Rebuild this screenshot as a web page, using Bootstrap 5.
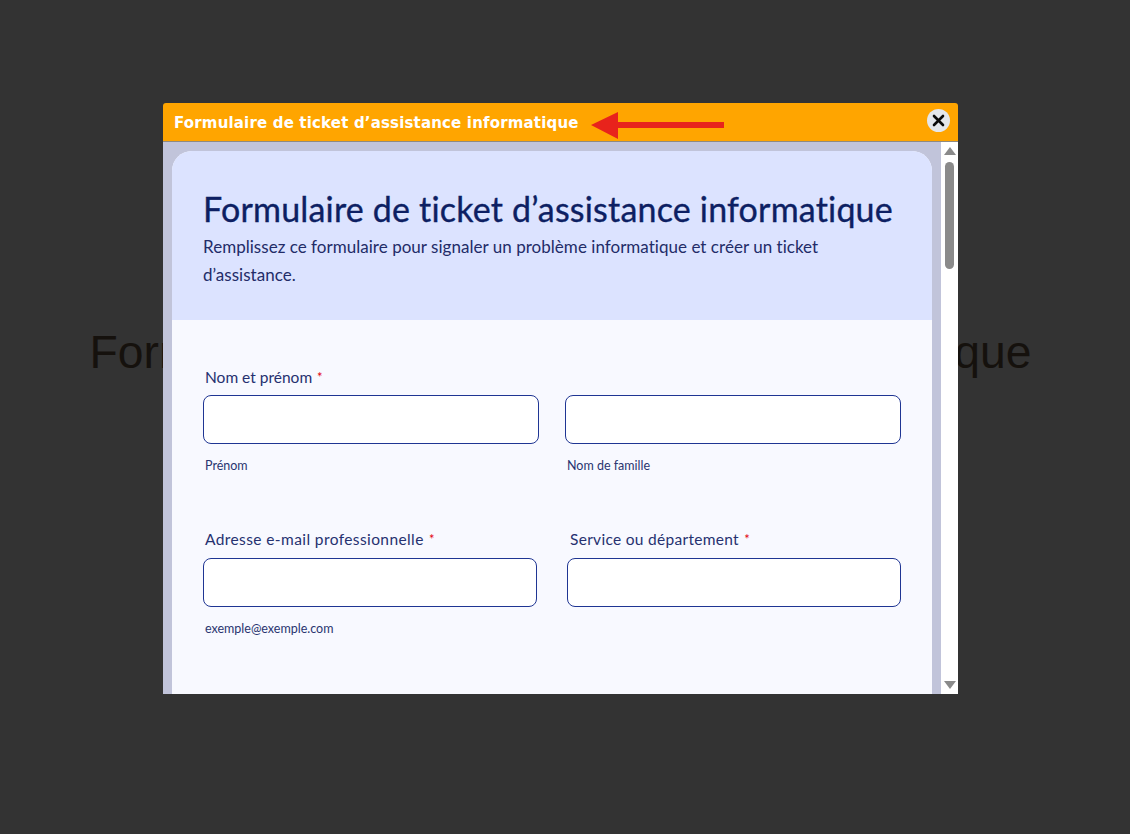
<!DOCTYPE html>
<html lang="fr">
<head>
<meta charset="utf-8">
<title>Formulaire de ticket d’assistance informatique</title>
<link rel="stylesheet" href="https://cdn.jsdelivr.net/npm/bootstrap@5.3.0/dist/css/bootstrap.min.css">
<style>
html, body { height: 100%; }
body { background: #333333; overflow: hidden; font-family: "Lato", "Noto Sans", sans-serif; font-variant-ligatures: none; }
.bg-heading { font-family: "Liberation Sans", Arial, sans-serif; font-size: 46.3px; line-height: 55px; color: #15110d; font-weight: 400; text-align: center; margin: 0; padding-top: 325px; padding-right: 9px; white-space: nowrap; }
.popup { position: absolute; left: 163px; top: 103px; width: 795px; height: 591px; border-radius: 3px 3px 0 0; overflow: hidden; display: flex; flex-direction: column; }
.popup-head { height: 39px; background: #ffa500; border-bottom: 1px solid #8f8a80; padding: 0 8px 0 11px; flex: none; }
.popup-title { font-family: "DejaVu Sans", Verdana, sans-serif; font-weight: 700; font-size: 15px; letter-spacing: .17px; color: #fff; white-space: nowrap; width: 405px; margin-top: 2px; }
.head-arrow { margin-left: 12px; margin-top: 5px; display: block; }
.close-x { width: 23px; height: 23px; border: 0; padding: 0; background: #e4e7ec; border-radius: 50%; margin-top: -4px; }
.popup-main { flex: 1; min-height: 0; }
.page-pane { flex: 1; min-width: 0; background: #c1c4da; padding: 9px 9px 0 9px; overflow: hidden; }
.form-sheet { border-radius: 20px 20px 0 0; overflow: hidden; background: #f8f9ff; color: #1f2a66; height: 700px; }
.sheet-head { background: #dce3ff; height: 169px; padding: 38px 30px 0 31px; }
.sheet-title { font-size: 34px; line-height: 40px; font-weight: 400; color: #0d1f63; margin: 0; white-space: nowrap; -webkit-text-stroke: .35px #0d1f63; letter-spacing: .19px; }
.sheet-sub { font-size: 17px; line-height: 28px; margin: 4px 0 0; color: #232c68; letter-spacing: .03px; }
.sheet-body { padding: 47px 31px 0 31px; }
.fld-label { font-size: 15.5px; line-height: 20px; margin: 0 0 8px 2px; display: block; color: #263170; }
.lbl-wide { letter-spacing: .4px; margin-bottom: 9px; }
.req { color: #e3000f; font-size: 13px; margin-left: 1px; vertical-align: 1px; }
.fld-input.form-control { height: 49px; border: 1px solid #1f3593; border-radius: 8px; background: #fff; }
.fld-hint { font-size: 12.5px; line-height: 16px; margin: 14px 0 0 2px; color: #2a3570; }
.fld-a { width: 336px; }
.fld-b { width: 334px; }
.row-one { height: 162px; }
.lbl-alt { margin-left: 3px; letter-spacing: .3px; }
.hint-alt { margin-left: 2px; }
.track { width: 17px; flex: none; background: #fff; padding: 5px 3px 5px 3px; }
.tri-up, .tri-down { width: 0; height: 0; border-left: 6px solid transparent; border-right: 6px solid transparent; margin-left: -.5px; }
.tri-up { border-bottom: 8px solid #8a8a8a; }
.tri-down { border-top: 8px solid #8a8a8a; margin-top: auto; }
.thumb { width: 9px; height: 107px; background: #8a8a8a; border-radius: 5px; margin: 7px 0 0 1px; }
</style>
</head>
<body>
<h1 class="bg-heading">Formulaire de ticket d’assistance informatique</h1>

<div class="popup" role="dialog">
  <div class="popup-head d-flex align-items-center">
    <div class="popup-title">Formulaire de ticket d’assistance informatique</div>
    <svg class="head-arrow" width="134" height="28" viewBox="0 0 134 28" aria-hidden="true"><path d="M0 14 L27 1 V11 H133 V17 H27 V28 Z" fill="#e8231c"/></svg>
    <button class="close-x ms-auto d-flex align-items-center justify-content-center" type="button" aria-label="Fermer">
      <svg width="13" height="13" viewBox="0 0 13 13" aria-hidden="true"><path d="M2 2 L11 11 M11 2 L2 11" stroke="#0b0b0b" stroke-width="2.6" stroke-linecap="round"/></svg>
    </button>
  </div>
  <div class="popup-main d-flex">
    <div class="page-pane">
      <div class="form-sheet">
        <div class="sheet-head">
          <h2 class="sheet-title">Formulaire de ticket d’assistance informatique</h2>
          <p class="sheet-sub">Remplissez ce formulaire pour signaler un problème informatique et créer un ticket d’assistance.</p>
        </div>
        <div class="sheet-body">
          <div class="row-one">
            <label class="fld-label">Nom et prénom <span class="req">*</span></label>
            <div class="d-flex justify-content-between">
              <div class="fld-a">
                <input class="form-control fld-input" type="text" aria-label="Prénom">
                <div class="fld-hint">Prénom</div>
              </div>
              <div class="fld-a">
                <input class="form-control fld-input" type="text" aria-label="Nom de famille">
                <div class="fld-hint hint-alt">Nom de famille</div>
              </div>
            </div>
          </div>
          <div class="d-flex justify-content-between">
            <div class="fld-b">
              <label class="fld-label lbl-wide">Adresse e-mail professionnelle <span class="req">*</span></label>
              <input class="form-control fld-input" type="email" aria-label="Adresse e-mail">
              <div class="fld-hint">exemple@exemple.com</div>
            </div>
            <div class="fld-b">
              <label class="fld-label lbl-wide lbl-alt">Service ou département <span class="req">*</span></label>
              <input class="form-control fld-input" type="text" aria-label="Service">
            </div>
          </div>
        </div>
      </div>
    </div>
    <div class="track d-flex flex-column">
      <div class="tri-up"></div>
      <div class="thumb"></div>
      <div class="tri-down"></div>
    </div>
  </div>
</div>
<script src="https://cdn.jsdelivr.net/npm/bootstrap@5.3.0/dist/js/bootstrap.bundle.min.js"></script>
</body>
</html>
